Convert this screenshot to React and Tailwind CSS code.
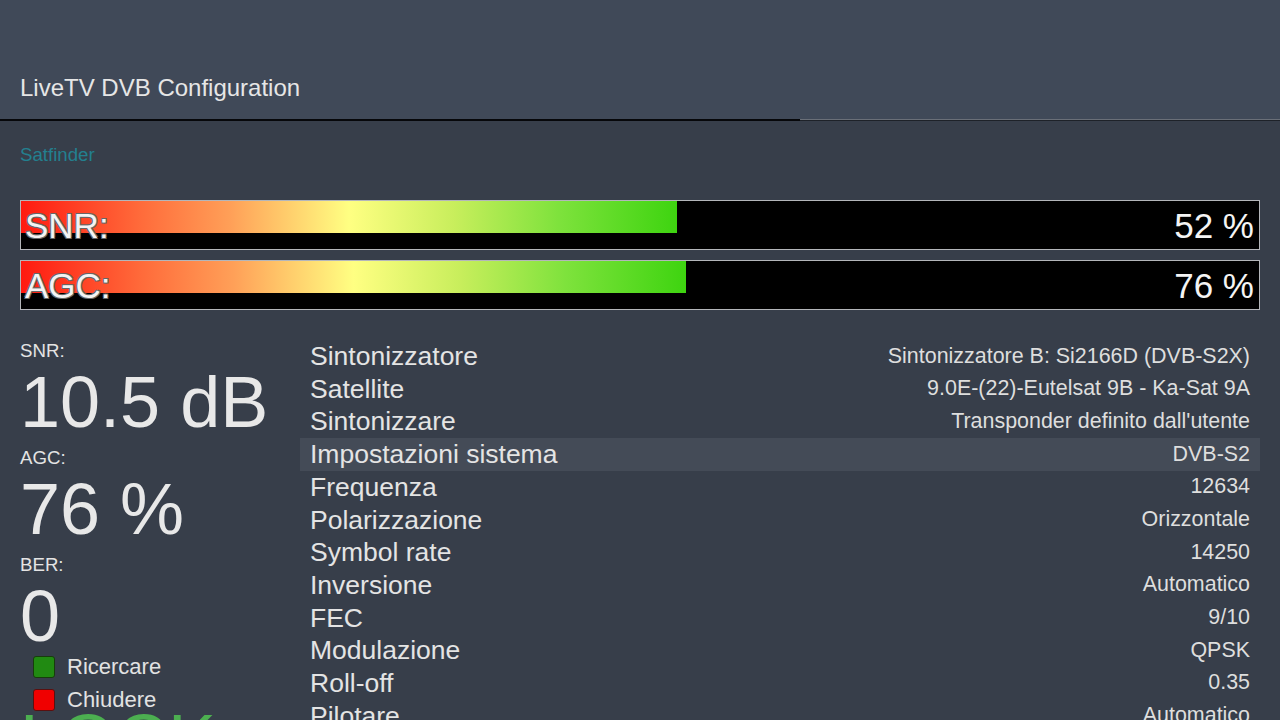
import React from "react";

const rows = [
  ["Sintonizzatore", "Sintonizzatore B: Si2166D (DVB-S2X)"],
  ["Satellite", "9.0E-(22)-Eutelsat 9B - Ka-Sat 9A"],
  ["Sintonizzare", "Transponder definito dall'utente"],
  ["Impostazioni sistema", "DVB-S2", true],
  ["Frequenza", "12634"],
  ["Polarizzazione", "Orizzontale"],
  ["Symbol rate", "14250"],
  ["Inversione", "Automatico"],
  ["FEC", "9/10"],
  ["Modulazione", "QPSK"],
  ["Roll-off", "0.35"],
  ["Pilotare", "Automatico"],
];

function Bar({ label, value, fill }) {
  return (
    <div className="relative h-[50px] border border-[#b4b6ba] bg-black">
      <div
        className="absolute left-0 top-0 h-[32px] bg-[linear-gradient(to_right,#ff1a10_0%,#ff6a3a_18%,#ffa058_32%,#ffff82_50%,#c8ee5c_66%,#7ee23c_82%,#3ed410_100%)]"
        style={{ width: fill + "px" }}
      />
      <div className="relative flex h-full items-center justify-between pl-[4px] pr-[5px] text-[35px] leading-none text-[#f4f4f4]">
        <span className="[text-shadow:-1px_-1px_0_#666,1px_-1px_0_#666,-1px_1px_0_#666,1px_1px_0_#666]">{label}</span>
        <span>{value}</span>
      </div>
    </div>
  );
}

function Stat({ label, value }) {
  return (
    <div className="mb-[9px]">
      <div className="h-[22px] text-[18.67px] leading-[22px] text-[#e4e4e4]">{label}</div>
      <div className="mt-[4px] h-[72px] text-[72px] leading-[72px] text-[#e8e8e8]">{value}</div>
    </div>
  );
}

export default function App() {
  return (
    <div
      className="h-[720px] w-[1280px] overflow-hidden bg-[#373e4a]"
      style={{ fontFamily: '"Liberation Sans", Arial, sans-serif' }}
    >
      <div className="flex h-[119px] items-end bg-[#404958] px-5 pb-[17px]">
        <div className="text-[24px] leading-[28px] text-[#e6e6e6]">LiveTV DVB Configuration</div>
      </div>
      <div className="flex h-[2px]">
        <div className="h-[2px] w-[800px] bg-[#06070a]" />
        <div className="flex-1 border-t border-[#6a6f78] bg-[#1e2229]" />
      </div>

      <div className="px-5">
        <div className="pt-[23px] text-[18.67px] leading-[22px] text-[#23808f]">Satfinder</div>
        <div className="mt-[34px] flex flex-col gap-[10px]">
          <Bar label="SNR:" value="52 %" fill={656} />
          <Bar label="AGC:" value="76 %" fill={665} />
        </div>

        <div className="mt-[30px] flex">
          <div className="w-[280px] shrink-0">
            <Stat label="SNR:" value="10.5 dB" />
            <Stat label="AGC:" value="76 %" />
            <div>
              <div className="h-[22px] text-[18.67px] leading-[22px] text-[#e4e4e4]">BER:</div>
              <div className="mt-[4px] h-[72px] text-[72px] leading-[72px] text-[#e8e8e8]">0</div>
            </div>
            <div className="-mt-[2px]">
              <div className="flex h-[33px] items-center pl-[13px]">
                <div className="h-[22px] w-[22px] rounded-[3px] border border-[#173d0c] bg-[#218a12]" />
                <span className="ml-[12px] text-[22px] leading-none text-[#e2e2e2]">Ricercare</span>
              </div>
              <div className="flex h-[33px] items-center pl-[13px]">
                <div className="h-[22px] w-[22px] rounded-[3px] border border-[#5a1010] bg-[#f00000]" />
                <span className="ml-[12px] text-[22px] leading-none text-[#e2e2e2]">Chiudere</span>
              </div>
            </div>
            <div className="-mt-[12px] text-[72px] leading-[72px] text-[#4caf50]">LOCK</div>
          </div>

          <div className="flex-1">
            {rows.map(([k, v, hl]) => (
              <div
                key={k}
                className={
                  "flex h-[32.7px] items-center justify-between px-[10px] " +
                  (hl ? "bg-[#444b57]" : "")
                }
              >
                <span className="text-[26.5px] leading-none text-[#e4e4e4]">{k}</span>
                <span className="text-[21.45px] leading-none text-[#dedede]">{v}</span>
              </div>
            ))}
          </div>
        </div>
      </div>
    </div>
  );
}
